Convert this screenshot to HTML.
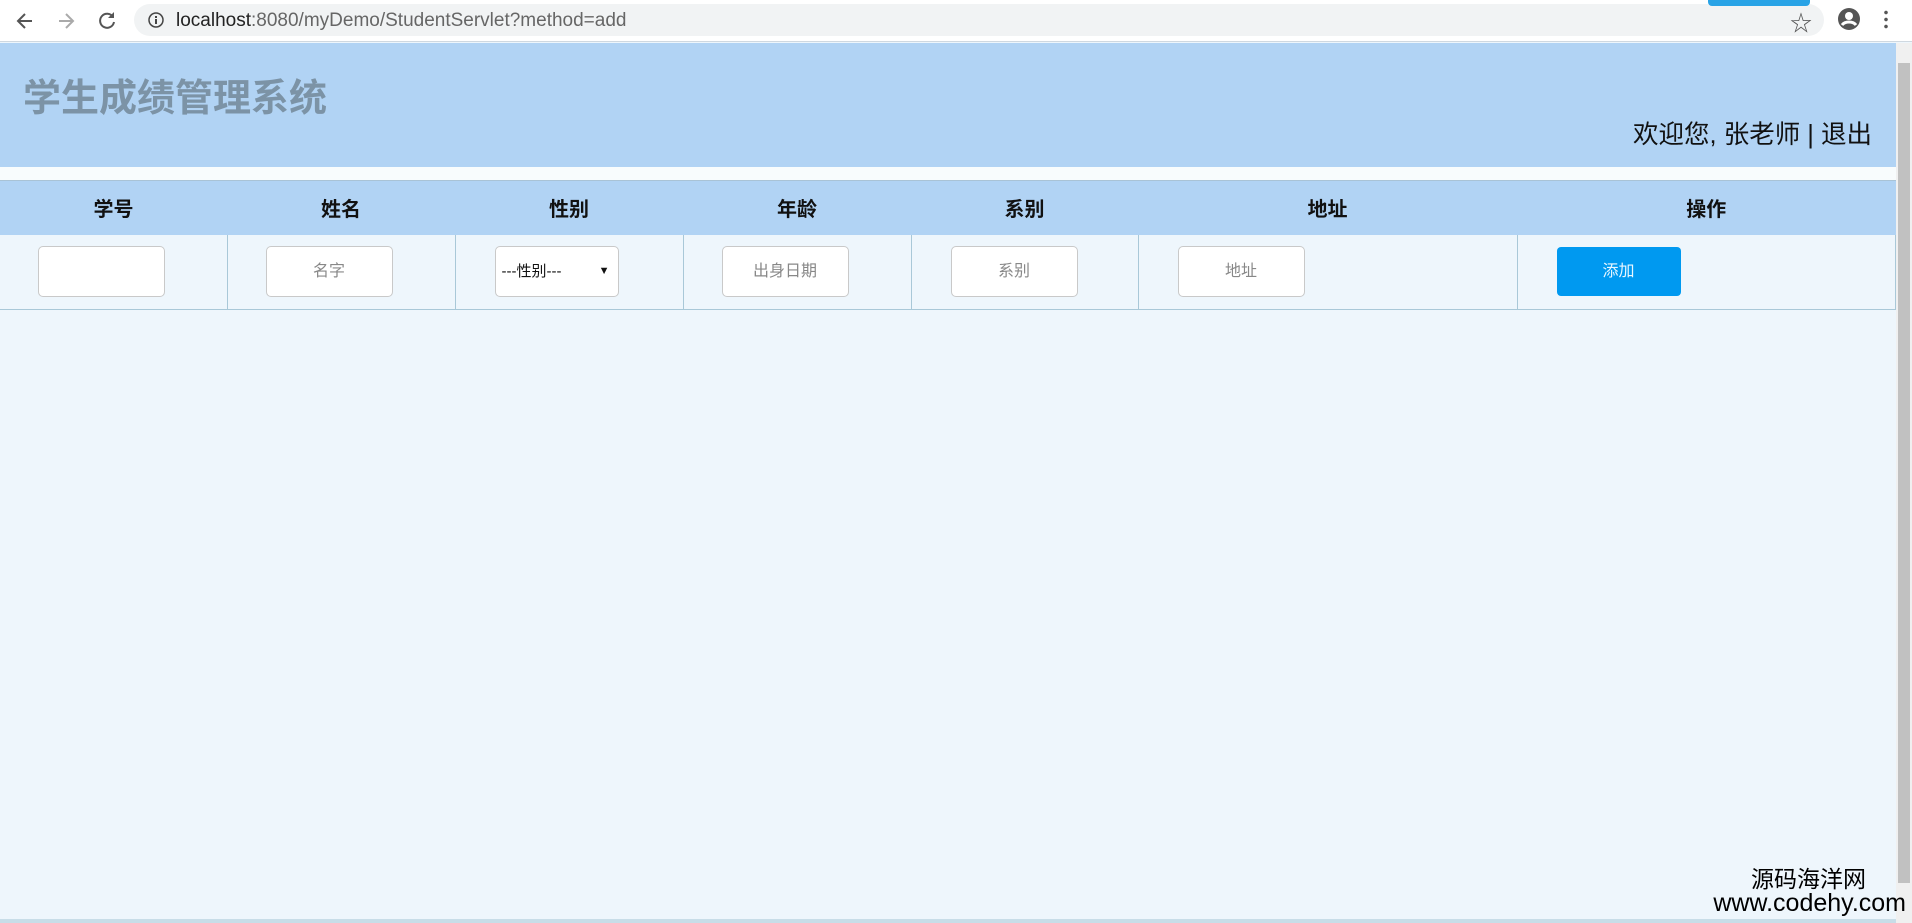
<!DOCTYPE html>
<html><head><meta charset="utf-8"><style>
*{margin:0;padding:0;box-sizing:border-box}
body{width:1912px;height:923px;overflow:hidden;background:#eef6fc;font-family:"Liberation Sans","Noto Sans CJK SC",sans-serif;position:relative}
.chrome{position:absolute;left:0;top:0;width:1912px;height:42px;background:#fff;border-bottom:1px solid #cfd8e0}
.url{position:absolute;left:134px;top:4px;width:1690px;height:32px;background:#f1f3f4;border-radius:16px}
.url span{position:absolute;left:42px;top:6px;font-size:19px;color:#666}
.url b{font-weight:normal;color:#222}
.hdr{position:absolute;left:0;top:43px;width:1896px;height:124px;background:#b1d3f4}
.title{position:absolute;left:23px;top:24px;font-size:38px;font-weight:bold;color:#7c93a6}
.welcome{position:absolute;right:24px;top:71px;font-size:25.5px;color:#111}
.gap{position:absolute;left:0;top:167px;width:1896px;height:13px;background:#f8fcfd}
table{position:absolute;left:0;top:180px;width:1896px;border-collapse:collapse}
th{height:54px;background:#b1d3f4;font-size:20px;color:#111;border-top:1px solid #a9c3d6}
td{height:75px;border:1px solid #a9c8d8;border-top:none;position:relative}
td:first-child{border-left:none}
.in{position:absolute;top:11px;width:127px;height:51px;background:#fff;border:1px solid #c9c9c9;border-radius:5px;font-size:16px;color:#888;text-align:center;line-height:49px}
.btn{position:absolute;top:12px;left:39px;width:124px;height:49px;background:#0099f0;border-radius:4px;color:#e8f6ff;font-size:16px;text-align:center;line-height:49px}
.sb{position:absolute;left:1896px;top:43px;width:16px;height:880px;background:#f0f0f0}
.sb div{position:absolute;left:2px;top:20px;width:12px;height:820px;background:#c1c1c1}
.wm{position:absolute;right:6px;bottom:8px;text-align:right;color:#000;line-height:24px}
</style></head><body>
<div class="chrome">
<svg style="position:absolute;left:14px;top:10px" width="22" height="22" viewBox="0 0 22 22"><path d="M18 11H5M11 4l-7 7 7 7" stroke="#555" stroke-width="2" fill="none"/></svg>
<svg style="position:absolute;left:55px;top:10px" width="22" height="22" viewBox="0 0 22 22"><path d="M4 11h13M11 4l7 7-7 7" stroke="#aaa" stroke-width="2" fill="none"/></svg>
<svg style="position:absolute;left:96px;top:9px" width="22" height="22" viewBox="0 0 22 22"><path d="M17 8a7 7 0 1 0 1 5" stroke="#555" stroke-width="2" fill="none"/><path d="M18 3v6h-6z" fill="#555"/></svg>
<div class="url"><svg style="position:absolute;left:14px;top:8px" width="16" height="16"><circle cx="8" cy="8" r="7" stroke="#444" stroke-width="1.5" fill="none"/><rect x="7" y="7" width="2" height="5" fill="#444"/><rect x="7" y="4" width="2" height="2" fill="#444"/></svg><span><b>localhost</b>:8080/myDemo/StudentServlet?method=add</span>
<div style="position:absolute;right:12px;top:2px;font-size:22px;color:#555">☆</div></div>
<div style="position:absolute;left:1708px;top:0;width:102px;height:6px;background:#29a3e6;border-radius:0 0 4px 4px"></div>
<svg style="position:absolute;left:1837px;top:7px" width="24" height="24"><circle cx="12" cy="12" r="11" fill="#555"/><circle cx="12" cy="9" r="4" fill="#fff"/><path d="M5 18c3-4 11-4 14 0" stroke="#fff" stroke-width="3" fill="none"/></svg>
<div style="position:absolute;left:1884px;top:9px;width:4px;height:20px;background:radial-gradient(circle,#555 1.6px,transparent 2px) 0 0/4px 7px"></div>
</div>
<div class="hdr"><div class="title">学生成绩管理系统</div><div class="welcome">欢迎您, 张老师 | 退出</div></div>
<div class="gap"></div>
<table>
<tr><th style="width:227px">学号</th><th style="width:228px">姓名</th><th style="width:228px">性别</th><th style="width:228px">年龄</th><th style="width:227px">系别</th><th style="width:379px">地址</th><th>操作</th></tr>
<tr><td><div class="in" style="left:38px"></div></td>
<td><div class="in" style="left:38px">名字</div></td>
<td><div class="in" style="left:39px;width:124px;text-align:left;padding-left:6px;color:#111;font-size:15px">---性别---<span style="position:absolute;right:8px;font-size:11px">▼</span></div></td>
<td><div class="in" style="left:38px">出身日期</div></td>
<td><div class="in" style="left:39px">系别</div></td>
<td><div class="in" style="left:39px">地址</div></td>
<td><div class="btn">添加</div></td></tr>
</table>
<div class="sb"><div></div></div>
<div style="position:absolute;left:0;top:919px;width:1896px;height:4px;background:#c8dde8"></div>
<div class="wm"><div style="font-size:23px;margin-right:40px">源码海洋网</div><div style="font-size:25px">www.codehy.com</div></div>
</body></html>
